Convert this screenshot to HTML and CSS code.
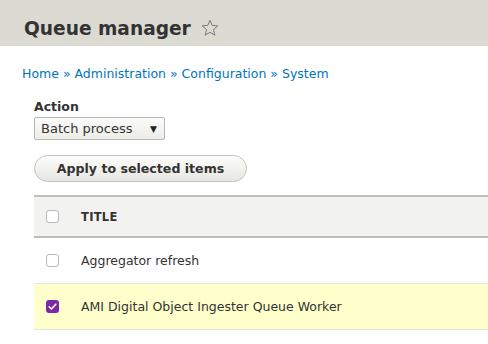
FILE: index.html
```html
<!DOCTYPE html>
<html lang="en">
<head>
    <meta charset="UTF-8">
    <title>Queue manager</title>
    <link rel="stylesheet" href="styles.css">
</head>
<body>
    <div class="page-header">
        <h1 class="page-title">Queue manager</h1>
        <svg class="star" width="18" height="18" viewBox="0 0 18 18">
            <path d="M9 1.2 L11.2 6.4 L16.8 6.9 L12.5 10.6 L13.8 16.2 L9 13.3 L4.2 16.2 L5.5 10.6 L1.2 6.9 L6.8 6.4 Z" fill="none" stroke="#7a7a7a" stroke-width="1" stroke-linejoin="round"/>
        </svg>
    </div>

    <div class="content">
        <nav class="breadcrumb">
            <a href="#">Home</a> » <a href="#">Administration</a> » <a href="#">Configuration</a> » <a href="#">System</a>
        </nav>

        <form class="bulk-form">
            <label class="form-label" for="action">Action</label>
            <div class="select">
                <span>Batch process</span>
                <span class="arrow">▼</span>
            </div>
            <button type="button" class="button">Apply to selected items</button>

            <table class="queue-table">
                <thead>
                    <tr>
                        <th class="select-col"><span class="checkbox"></span></th>
                        <th>Title</th>
                    </tr>
                </thead>
                <tbody>
                    <tr>
                        <td class="select-col"><span class="checkbox"></span></td>
                        <td>Aggregator refresh</td>
                    </tr>
                    <tr class="selected">
                        <td class="select-col"><span class="checkbox checked">
                            <svg width="13" height="13" viewBox="0 0 13 13"><path d="M3.2 6.8 L5.4 9 L9.8 4.2" fill="none" stroke="#fff" stroke-width="1.6" stroke-linecap="round" stroke-linejoin="round"/></svg>
                        </span></td>
                        <td>AMI Digital Object Ingester Queue Worker</td>
                    </tr>
                </tbody>
            </table>
        </form>
    </div>
</body>
</html>
```

FILE: styles.css
```css
body {
    margin: 0;
    font-family: "DejaVu Sans", sans-serif;
    font-size: 13px;
    color: #333;
    background: #fff;
    overflow: hidden;
}

.page-header {
    display: flex;
    align-items: flex-end;
    height: 46px;
    padding: 0 0 5px 24px;
    background-color: #dbdbd3;
    border-bottom: 1px solid #d8d8cc;
    box-sizing: border-box;
}

.page-title {
    margin: 0;
    font-size: 18.6px;
    line-height: 22px;
    font-weight: bold;
    color: #333;
}

.star {
    margin-left: 10px;
    margin-bottom: 3px;
}

.content {
    padding: 0 0 0 22px;
}

.breadcrumb {
    margin-top: 20px;
    font-size: 12.5px;
    color: #0074bd;
}

.breadcrumb a {
    color: #0074bd;
    text-decoration: none;
}

.bulk-form {
    margin-left: 12px;
    margin-top: 19px;
    display: flex;
    flex-direction: column;
    align-items: flex-start;
}

.form-label {
    font-size: 12.5px;
    font-weight: bold;
    color: #333;
    line-height: 14px;
}

.select {
    display: flex;
    align-items: center;
    justify-content: space-between;
    width: 131px;
    height: 23px;
    margin-top: 3px;
    padding: 0 7px 0 6px;
    box-sizing: border-box;
    border: 1px solid #b7b7b3;
    border-radius: 2px;
    background: linear-gradient(#fbfbf9, #ecece8);
    font-size: 13px;
    color: #333;
}

.arrow {
    font-size: 9px;
    color: #222;
}

.button {
    margin-top: 15px;
    width: 213px;
    height: 27px;
    border: 1px solid #c2c2be;
    border-radius: 14px;
    background: linear-gradient(#fdfdfb, #e6e6e2);
    font-family: "DejaVu Sans", sans-serif;
    font-size: 12.6px;
    font-weight: bold;
    color: #333;
    padding: 0;
}

.queue-table {
    margin-top: 13px;
    width: 100%;
    border-collapse: collapse;
}

.queue-table th,
.queue-table td {
    text-align: left;
    padding: 0;
    height: 46px;
    box-sizing: border-box;
}

.queue-table thead th {
    height: 41px;
    background: #f2f2f1;
    border-top: 2px solid #bfbfba;
    border-bottom: 2px solid #bfbfba;
    font-size: 11.5px;
    font-weight: bold;
    text-transform: uppercase;
    color: #333;
    letter-spacing: 0.3px;
}

.queue-table tbody td {
    border-bottom: 1px solid #e6e4df;
    font-size: 12.5px;
    color: #333;
}

.queue-table tbody tr.selected td {
    background: #ffffcc;
}

.select-col {
    width: 47px;
    padding-left: 12px !important;
}

.checkbox {
    display: block;
    width: 11px;
    height: 11px;
    border: 1px solid #b9b9b9;
    border-radius: 3px;
    background: #fff;
}

.checkbox.checked {
    width: 13px;
    height: 13px;
    border: none;
    background: #7d28a6;
}

.checkbox svg {
    display: block;
}
```
